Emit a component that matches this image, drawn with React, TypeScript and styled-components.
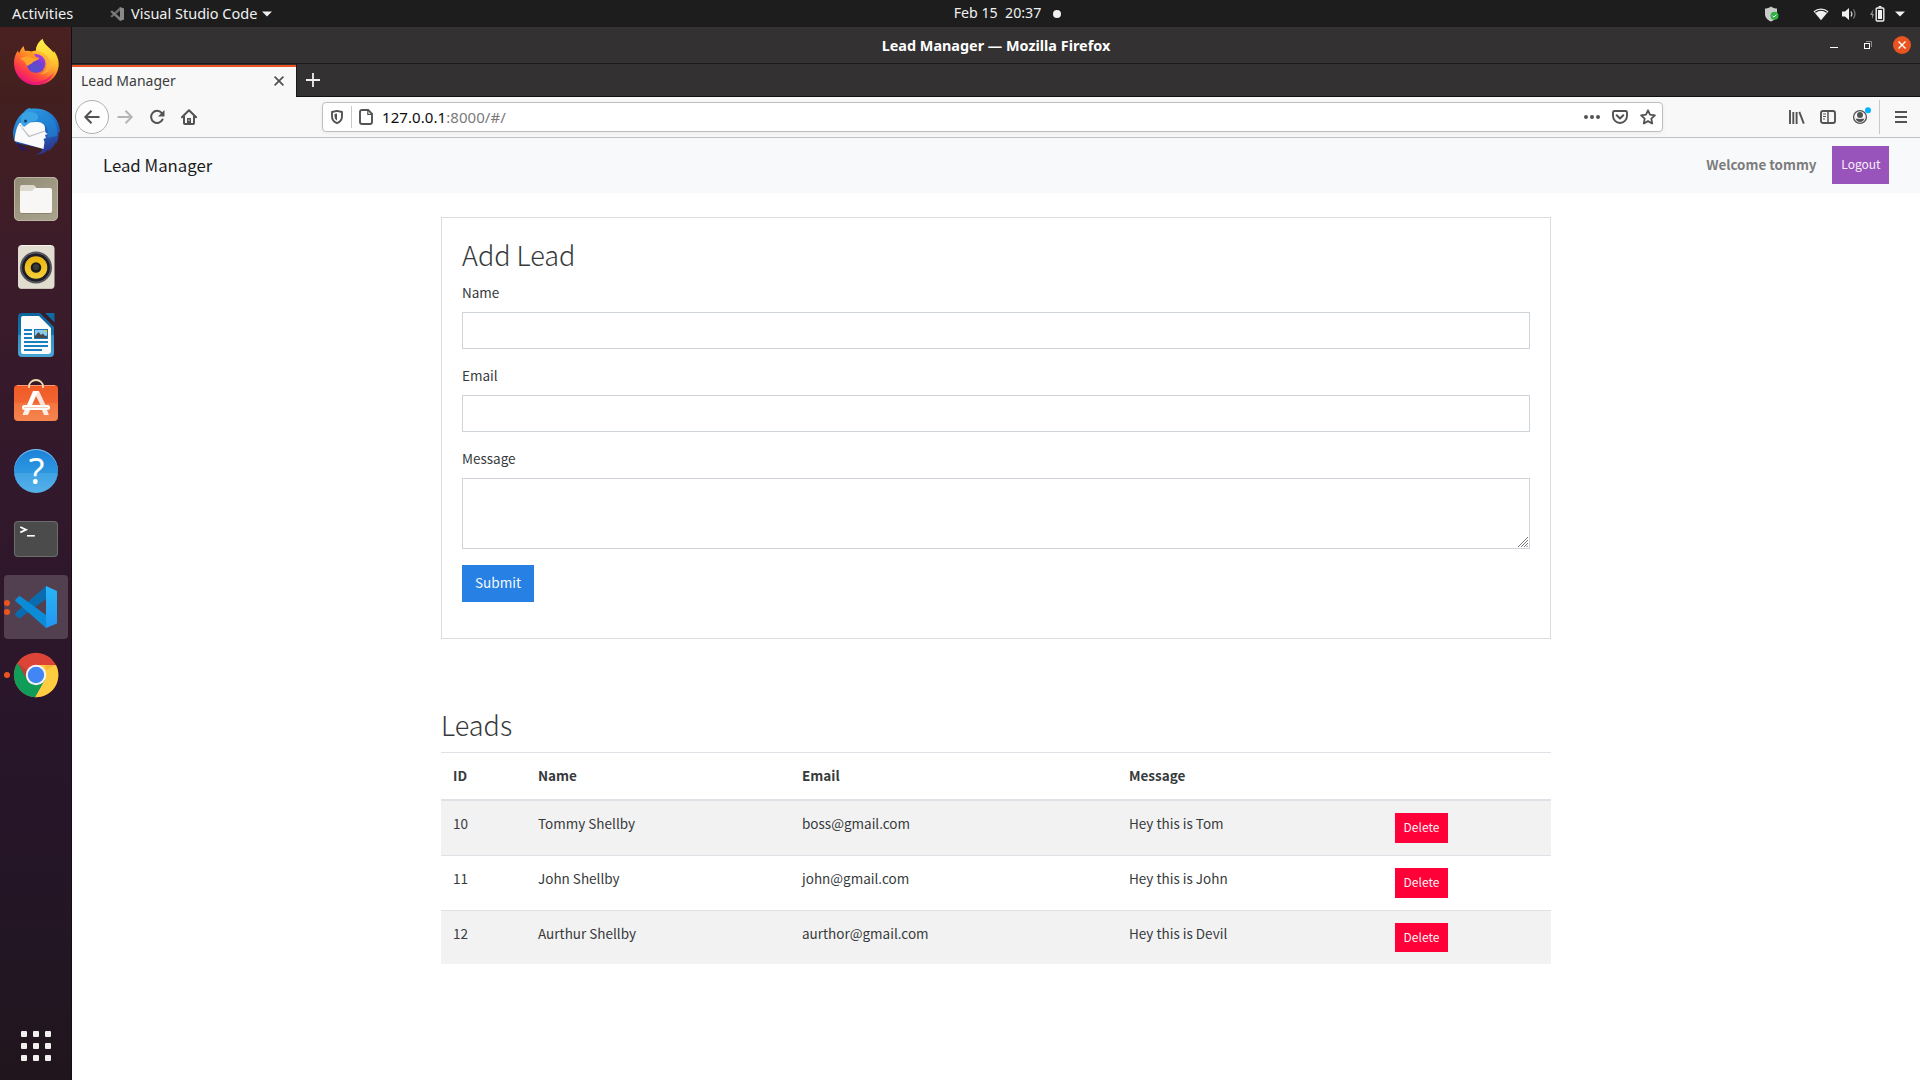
import React from "react";
import styled, { createGlobalStyle } from "styled-components";

const ui = `"Noto Sans", "Open Sans", sans-serif`;
const web = `"Noto Sans CJK SC", "Open Sans", sans-serif`;

const GlobalStyle = createGlobalStyle`
  * { box-sizing: border-box; }
  body { margin: 0; background: #fff; }
`;

/* ---------- desktop shell ---------- */

const Desktop = styled.div`
  width: 1920px;
  height: 1080px;
  display: flex;
  flex-direction: column;
  overflow: hidden;
  font-family: ${ui};
`;

const TopBar = styled.header`
  height: 27px;
  flex: none;
  display: grid;
  grid-template-columns: 1fr auto 1fr;
  align-items: center;
  background: #1d1d1d;
  color: #f0f0f0;
  font-size: 14.5px;
  line-height: 24px;
  white-space: pre;
`;

const TopLeft = styled.div`
  display: flex;
  align-items: center;
  padding-left: 12px;
`;

const Activities = styled.span`
  width: 98px;
  padding-bottom: 2px;
  font-size: 14.6px;
  letter-spacing: 0.05px;
`;

const FocusedApp = styled.span`
  margin-left: 7px;
  margin-right: 5px;
  padding-bottom: 2px;
`;

const Clock = styled.div`
  display: flex;
  align-items: center;
  gap: 12px;
  margin-left: 95px;
  font-size: 14.2px;
`;

const ClockText = styled.span`
  padding-bottom: 2px;
`;

const NoticeDot = styled.i`
  width: 8px;
  height: 8px;
  border-radius: 50%;
  background: #f2f2f2;
`;

const Tray = styled.div`
  display: flex;
  align-items: center;
  justify-content: flex-end;
  padding-right: 15px;
`;

const TrayItem = styled.span<{ $gap: number }>`
  display: flex;
  margin-right: ${(p) => p.$gap}px;
`;

const Workspace = styled.div`
  flex: 1;
  min-height: 0;
  display: flex;
`;

const Dock = styled.nav`
  width: 72px;
  flex: none;
  display: flex;
  flex-direction: column;
  align-items: center;
  gap: 4px;
  padding-top: 4px;
  border-right: 1px solid #160c14;
  background: linear-gradient(180deg, #4a2120 0%, #43201f 6%, #3d1c29 20%, #34192b 38%, #2f172b 52%, #27152a 70%, #231624 88%, #20151c 100%);
`;

const DockTile = styled.div<{ $active?: boolean }>`
  position: relative;
  width: 64px;
  height: 64px;
  flex: none;
  display: grid;
  place-items: center;
  border-radius: 4px;
  background: ${(p) => (p.$active ? "#524050" : "transparent")};
`;

const Running = styled.span`
  position: absolute;
  left: 0;
  top: 0;
  height: 64px;
  display: flex;
  flex-direction: column;
  justify-content: center;
  gap: 3px;
`;

const RunningDot = styled.i`
  width: 6px;
  height: 6px;
  border-radius: 50%;
  background: #e95420;
`;

const AppsGrid = styled.div`
  margin-top: auto;
  margin-bottom: 19px;
  display: grid;
  grid-template-columns: repeat(3, 6px);
  gap: 6px;
`;

const AppsDot = styled.i`
  height: 6px;
  border-radius: 1px;
  background: #f2f0ee;
`;

/* ---------- browser ---------- */

const BrowserWindow = styled.section`
  flex: 1;
  min-width: 0;
  display: flex;
  flex-direction: column;
`;

const TitleBar = styled.div`
  height: 37px;
  flex: none;
  display: grid;
  grid-template-columns: 1fr auto 1fr;
  align-items: center;
  background: #333132;
  border-bottom: 1px solid #1c1b1b;
`;

const WindowTitle = styled.div`
  grid-column: 2;
  padding-top: 2px;
  color: #fff;
  font-size: 14.4px;
  font-weight: 700;
  line-height: 34px;
`;

const WindowButtons = styled.div`
  display: flex;
  justify-content: flex-end;
  align-items: center;
  gap: 22px;
  padding-right: 9px;
`;

const RestoreSlot = styled.span`
  display: flex;
  margin-right: -3px;
`;

const TabStrip = styled.div`
  height: 33px;
  flex: none;
  display: flex;
  background: #333132;
`;

const Tab = styled.div`
  width: 224px;
  display: flex;
  align-items: center;
  justify-content: space-between;
  padding: 0 12px 2px 9px;
  margin-top: 1px;
  border-top: 2px solid #e95420;
  background: #f8f8f8;
  color: #3c3c3c;
  font-size: 14px;
`;

const TabTitle = styled.span`
  padding-bottom: 1px;
`;

const StripRest = styled.div`
  flex: 1;
  padding: 7px 0 0 8px;
  border-bottom: 1px solid #111;
  border-left: 1px solid #1b1a1a;
`;

const Toolbar = styled.div`
  height: 41px;
  flex: none;
  display: flex;
  align-items: center;
  padding: 0 12px 0 3px;
  background: #f8f8f8;
  border-bottom: 1px solid #bfbfbf;
`;

const BackButton = styled.div`
  width: 34px;
  height: 34px;
  display: grid;
  place-items: center;
  border: 1px solid #b0b0b0;
  border-radius: 50%;
  background: #fdfdfd;
`;

const ToolIcon = styled.span<{ $ml: number }>`
  display: flex;
  margin-left: ${(p) => p.$ml}px;
`;

const UrlBar = styled.div`
  width: 1341px;
  height: 30px;
  margin-left: 125px;
  display: flex;
  align-items: center;
  padding: 0 6px;
  border: 1px solid #bebebe;
  border-radius: 4px;
  background: #fff;
  box-shadow: 0 1px 4px rgba(0, 0, 0, 0.06);
`;

const Url = styled.span`
  margin-left: 9px;
  flex: 1;
  color: #7b7b7b;
  font-size: 15px;
  letter-spacing: 0.07px;
  line-height: 24px;
`;

const UrlHost = styled.span`
  color: #0c0c0d;
`;

const Divider = styled.i<{ $h: number; $ml: number }>`
  width: 1px;
  height: ${(p) => p.$h}px;
  margin-left: ${(p) => p.$ml}px;
  background: #c9c9c9;
`;

/* ---------- lead manager page ---------- */

const Page = styled.main`
  flex: 1;
  background: #fff;
  color: #373a3c;
  font-family: ${web};
  font-size: 13.5px;
  line-height: 20px;
`;

const Navbar = styled.div`
  height: 55px;
  display: flex;
  align-items: center;
  padding: 0 31px;
  background: #f8f9fb;
`;

const Brand = styled.span`
  flex: 1;
  color: #1c1c1c;
  font-size: 16.8px;
  line-height: 24px;
  padding-bottom: 1px;
`;

const Welcome = styled.strong`
  margin-right: 15.5px;
  padding-bottom: 3px;
  color: #7c7c7d;
  font-size: 13.4px;
`;

const Logout = styled.button`
  width: 57px;
  height: 38px;
  margin-bottom: 1px;
  padding: 0 0 2px 1px;
  border: 0;
  background: #9954bb;
  color: #f7f0fa;
  font: 12px/20px ${web};
`;

const Container = styled.div`
  width: 1110px;
  margin: 24px auto 0;
`;

const Card = styled.section`
  padding: 20px;
  border: 1px solid #dcdddf;
`;

const Heading = styled.h2`
  margin: 0 0 10px;
  font-size: 27px;
  font-weight: 300;
  line-height: 34px;
`;

const Field = styled.label`
  display: block;
  margin-bottom: 16px;
`;

const FieldName = styled.span`
  display: block;
  margin-bottom: 10px;
`;

const Input = styled.input`
  display: block;
  width: 100%;
  height: 37px;
  border: 1px solid #ced4da;
  background: #fff;
`;

const TextAreaWrap = styled.span`
  position: relative;
  display: block;
`;

const TextArea = styled.textarea`
  display: block;
  width: 100%;
  height: 71px;
  border: 1px solid #ced4da;
  background: #fff;
  resize: none;
`;

const Grip = styled.svg`
  position: absolute;
  right: 2px;
  bottom: 2px;
`;

const Submit = styled.button`
  display: block;
  width: 72px;
  height: 37px;
  margin-bottom: 16px;
  padding: 0 0 4px;
  border: 0;
  background: #2780e3;
  color: #f4f8fd;
  font: 13.6px/20px ${web};
`;

const LeadsSection = styled.section`
  margin-top: 69px;
`;

const Table = styled.div`
  border-top: 1px solid #dee2e6;
`;

const columns = "85px 264px 327px 266px 1fr";

const HeadRow = styled.div`
  display: grid;
  grid-template-columns: ${columns};
  height: 48px;
  padding-top: 12px;
  border-bottom: 2px solid #dee2e6;
  font-weight: 700;
`;

const Row = styled.div<{ $odd: boolean; $last: boolean }>`
  display: grid;
  grid-template-columns: ${columns};
  height: ${(p) => (p.$last ? 53 : 55)}px;
  padding: 12px 0;
  background: ${(p) => (p.$odd ? "#f2f2f2" : "#fff")};
  border-bottom: ${(p) => (p.$last ? "0" : "1px solid #dee2e6")};
`;

const Cell = styled.div`
  padding: 0 12px;
`;

const Delete = styled.button<{ $short: boolean }>`
  display: block;
  width: 53px;
  height: ${(p) => (p.$short ? 29 : 30)}px;
  padding: 0 0 ${(p) => (p.$short ? 2 : 3)}px;
  border: 0;
  background: #ff0039;
  color: #fff0f3;
  font: 12px/20px ${web};
`;

/* ---------- icons ---------- */

const Caret = ({ w = 10 }: { w?: number }) => (
  <svg width={w} height="6" viewBox="0 0 10 6"><path d="M0 .5h10L5 5.5z" fill="#f0f0f0" /></svg>
);

const CodeMini = () => (
  <svg width="14" height="14" viewBox="0 0 14 14">
    <path d="M10 0v3.700L2 10.500.3 9.300z" fill="#6a6a6a" />
    <path d="M10 14v-3.700L2 3.500.3 4.700z" fill="#7d7d7d" />
    <path d="M10 0l4 1.600v10.800L10 14z" fill="#8a8a8a" />
  </svg>
);

const Firefox = () => (
  <svg width="48" height="48" viewBox="0 0 48 48">
    <defs>
      <linearGradient id="fxBody" x1=".8" y1=".1" x2=".25" y2=".95">
        <stop offset="0" stopColor="#ffe226" /><stop offset=".3" stopColor="#ffbd2b" />
        <stop offset=".55" stopColor="#ff7a2a" /><stop offset=".78" stopColor="#ff3c46" /><stop offset="1" stopColor="#e8147c" />
      </linearGradient>
      <linearGradient id="fxTail" x1=".5" y1="0" x2=".5" y2="1">
        <stop offset="0" stopColor="#fff04a" /><stop offset=".5" stopColor="#ffd236" /><stop offset="1" stopColor="#ff9a2c" stopOpacity="0.2" />
      </linearGradient>
      <radialGradient id="fxGlobe" cx=".45" cy=".75" r=".75">
        <stop offset="0" stopColor="#4f55c8" /><stop offset=".5" stopColor="#7040d2" /><stop offset="1" stopColor="#b437e0" />
      </radialGradient>
    </defs>
    <path d="M24.500 46C12 46 2 36.500 2 24c0-5 1.500-9.500 4-12.500l1 3C8 12 9.500 9 11.500 7l1.500 5c2-.5 4-.3 6 .5l5-1C24 7 27 2.500 30.500 0c1 3.500 3 6 6 8.500l5 5 .5-1.500c3 4 4.700 8 4.700 13C46.700 37 37 46 24.500 46z" fill="url(#fxBody)" />
    <path d="M24 11.500C24 7 27 2.500 30.500 0c1 3.500 3 6 6 8.500 6 5 10 11 8.500 20-1.500 7-8 9.500-12 8 5-3 7-9 5-15-2-5-7-9-14-10z" fill="url(#fxTail)" />
    <circle cx="24" cy="24.500" r="9.500" fill="url(#fxGlobe)" />
    <path d="M19 12.500c2 1.500 3 3 5 5.500 1.500.4 3 .5 3.500 1-1 2.500-6 2.500-6.500 4-.5 2-4 1.500-5 4-1.500-1-2-5-2-7 1-4 3-6 5-7.500z" fill="#ff9323" />
    <path d="M8 20c4-3 8-3 11-1 2 1 4 1 6.500 1-1 2-5 2.500-5.500 3.500-1 2-4 2-5 3.500C13.500 23 11 20.500 8 20z" fill="#ffa42a" />
    <path d="M29 15.500c4 2 7 6 6 11-.8 5-4 8-8 8.500 8 1 13-4 12-11-.8-5-5-8-10-8.500z" fill="#ffb13a" opacity=".85" />
    <path d="M3 30c3 9 12 14 21 13s15-5 18-10c-3 8-10 13-18 13-10 0-18-6-21-16z" fill="#e6157d" opacity=".7" />
  </svg>
);

const Thunderbird = () => (
  <svg width="48" height="48" viewBox="0 0 48 48">
    <defs>
      <linearGradient id="tbBody" x1=".3" y1="0" x2=".7" y2="1">
        <stop offset="0" stopColor="#2fa0e6" /><stop offset=".5" stopColor="#1c6bc4" /><stop offset="1" stopColor="#30308c" />
      </linearGradient>
    </defs>
    <path d="M1 25C2 18 5 10 12 5c1-2 4-4 7-4l-1 1c13-2 24 4 28 14 1 3 2 6 2 10l-1.500-1c.5 5-.5 8-2.500 12l-.5-2c-1 4-4 7-7 9l.5-2c-4 4-8 5.500-13 5.500 3-1 6-3 7-6L4 36C2 33 .5 29 1 25z" fill="url(#tbBody)" />
    <path d="M10 12 8 20 31 16c5 4 6 9 4 15l10-2c2-12-5-22-18-24C20 4 13 7 10 12z" fill="#2490dc" opacity=".5" />
    <path d="M5 35c4 4 8 7 13 9-3-1-6-1-8-3l2 4C8 42 6 39 5 35z" fill="#221a6b" />
    <path d="M7.500 16 24 15c4 0 9 1 9 6 0 3 0 5 3 6l-3 1 1 3-2.500 1 1 3-1 7L2.500 34C3 28 4 21 7.500 16z" fill="#fafafa" />
    <path d="m8 18 9 11.500L33 24M17.500 29.500l-3-3" fill="none" stroke="#b9bdc4" strokeWidth="1.200" />
    <path d="M10 8c3-4 9-4 13-2 4 2 4 5 1 8-3 0-6 1-8 3l-4 3c-3-2-3-4-3-6s0-4 1-6z" fill="#3aa3e3" />
    <path d="M9 17l3 3-3 3z" fill="#e6e6e6" />
    <circle cx="13.500" cy="14" r="1.500" fill="#1b3c63" />
  </svg>
);

const Files = () => (
  <svg width="48" height="48" viewBox="0 0 48 48">
    <defs><linearGradient id="flBg" x1="0" y1="0" x2="1" y2="1"><stop offset="0" stopColor="#8f8a76" /><stop offset=".5" stopColor="#9f9882" /><stop offset="1" stopColor="#a9a28d" /></linearGradient></defs>
    <rect x="2" y="2" width="44" height="44" rx="5" fill="url(#flBg)" />
    <rect x="2.500" y="2.500" width="43" height="43" rx="4.500" fill="none" stroke="#b9b3a0" />
    <path d="M8 16v-4q0-2 2-2h11q1.500 0 2.500 1.500L25 14l-3 3z" fill="#dcd8cb" />
    <path d="M8 16h12l3-3h15q2 0 2 2v21q0 2-2 2H10q-2 0-2-2z" fill="#f8f7f5" />
    <path d="M9.500 38.500h29" stroke="#7e7867" strokeWidth="1" opacity=".7" />
  </svg>
);

const Rhythmbox = () => (
  <svg width="48" height="48" viewBox="0 0 48 48">
    <defs><linearGradient id="rbY" x1="0" y1="0" x2="0" y2="1"><stop offset="0" stopColor="#e9b40d" /><stop offset="1" stopColor="#f7cf3a" /></linearGradient></defs>
    <rect x="6" y="2" width="36.500" height="44" rx="4" fill="#e1ddd1" />
    <path d="M9 2.500h30" stroke="#f5f3ee" /><path d="M9 45.500h30" stroke="#c7c2b4" />
    <circle cx="24" cy="24.500" r="16" fill="#55555b" />
    <circle cx="24" cy="24.500" r="14" fill="#1e1e29" />
    <circle cx="24" cy="24.500" r="11.300" fill="url(#rbY)" />
    <circle cx="24" cy="24.500" r="5.300" fill="#1c1c1c" />
    <circle cx="24" cy="24" r="3" fill="#3a3a3a" />
  </svg>
);

const Writer = () => (
  <svg width="48" height="48" viewBox="0 0 48 48">
    <defs><linearGradient id="wr" x1="0" y1="0" x2="0" y2="1"><stop offset="0" stopColor="#0d659c" /><stop offset=".5" stopColor="#0e76ae" /><stop offset=".5" stopColor="#2f92c4" /><stop offset="1" stopColor="#47a5d2" /></linearGradient></defs>
    <path d="M10 2h18l14 14v26q0 4-4 4H10q-4 0-4-4V6q0-4 4-4z" fill="url(#wr)" />
    <path d="M33 2h9.500v9.500z" fill="#0d6ba3" />
    <path d="M11 5h16l12 12v23q0 3-3 3H11q-2 0-2-2V7q0-2 2-2z" fill="#fcfcfc" />
    <path d="M12 19h8M12 23h8M12 27h8M12 31h24M12 35h24M12 39h18" stroke="#1a7fc0" strokeWidth="2" />
    <rect x="22" y="18" width="14" height="10" fill="#1579b8" /><rect x="23" y="19" width="12" height="8" fill="#8cc9ee" />
    <path d="M32 19h3v3z" fill="#f5c211" />
    <path d="M23 27v-2l3.500-4 2.500 3 2-1.500 2 2.500 2-.5V27z" fill="#474747" />
  </svg>
);

const Software = () => (
  <svg width="48" height="48" viewBox="0 0 48 48">
    <defs><linearGradient id="sw" x1="0" y1="0" x2="0" y2="1"><stop offset="0" stopColor="#f15a25" /><stop offset=".5" stopColor="#f26533" /><stop offset=".5" stopColor="#f3743f" /><stop offset="1" stopColor="#f5854f" /></linearGradient></defs>
    <rect x="2" y="6" width="44" height="36" rx="4" fill="url(#sw)" />
    <path d="M5 6.500h38" stroke="#f99a72" />
    <path d="M17 9V7.500a7 6.500 0 0 1 14 0V9" fill="none" stroke="#f5dcb0" strokeWidth="1.800" />
    <path d="M21 12h6l-1.500 5H24L20 26h-5z" fill="#fff" />
    <path d="M23.500 16 27 12l6.500 14h-5z" fill="#fce4da" />
    <path d="M12.500 31h5.500l-2 5h-5.500zM30 31h5l1.800 5H32z" fill="#fdeee8" />
    <rect x="10" y="26" width="28" height="5" rx="2.500" fill="#fff" />
    <path d="M12 28.500h24" stroke="#f6bda6" strokeWidth=".8" />
  </svg>
);

const HelpDisc = styled.div`
  width: 44px;
  height: 44px;
  padding-left: 2px;
  border-radius: 50%;
  background: linear-gradient(180deg, #1b82d8 0%, #2e97e0 54%, #3fa2e4 54%, #56b1ea 100%);
  box-shadow: inset 0 1px 0 #7fbdee;
  color: #fff;
  font: 36px/44px ${ui};
  text-align: center;
`;

const Help = () => <HelpDisc>?</HelpDisc>;

const Terminal = () => (
  <svg width="48" height="48" viewBox="0 0 48 48">
    <rect x="2" y="6" width="44" height="36" rx="4" fill="#4b4b4b" />
    <rect x="2.500" y="6.500" width="43" height="35" rx="3.500" fill="none" stroke="#6b6f6b" />
    <path d="m8.300 12 5.700 2.700-5.700 2.700" fill="none" stroke="#fff" strokeWidth="1.800" />
    <path d="M15 20.800h7.800" stroke="#fff" strokeWidth="1.600" />
  </svg>
);

const Code = () => (
  <svg width="48" height="48" viewBox="0 0 48 48">
    <defs><linearGradient id="vc" x1="0" y1="0" x2="0" y2="1"><stop offset="0" stopColor="#29b6f6" /><stop offset="1" stopColor="#2196f3" /></linearGradient></defs>
    <path d="M34 3v13L8.200 35q-.9.700-1.700-.1l-3-3q-.9-1 .1-1.900z" fill="#0a6cb0" />
    <path d="M34 45V32L8.200 13.300q-.9-.7-1.700.1l-3 3q-.9 1 .1 1.900z" fill="#0c8bd6" />
    <path d="M34 3 45 8v32.500L34 45z" fill="url(#vc)" />
  </svg>
);

const Chrome = () => (
  <svg width="48" height="48" viewBox="0 0 48 48">
    <circle cx="24" cy="24" r="22.200" fill="#db4437" />
    <path d="M24 14h20a22.200 22.200 0 0 1-21 32.200L33 28z" fill="#ffcd40" />
    <path d="M5.500 12A22.200 22.200 0 0 0 23 46.200L33 28.500l-9 5.500-8.500-5z" fill="#0f9d58" />
    <path d="M33 14h11l-10 5z" fill="#f2a93a" opacity=".6" />
    <path d="M5.500 12 15 29l1-9z" fill="#9c3a32" opacity=".45" />
    <circle cx="24" cy="24" r="10.200" fill="#f5f5f5" />
    <circle cx="24" cy="24" r="8.200" fill="#4285f4" />
  </svg>
);

const ink = "#535353";

const Arrow = ({ right, color }: { right?: boolean; color: string }) => (
  <svg width="16" height="16" viewBox="0 0 16 16">
    <path d={right ? "M.5 8h14M8.500 1.800 14.700 8l-6.200 6.200" : "M15.500 8h-14M7.500 1.800 1.300 8l6.200 6.200"} fill="none" stroke={color} strokeWidth="2" strokeLinejoin="round" />
  </svg>
);

const Reload = () => (
  <svg width="16" height="16" viewBox="0 0 16 16">
    <path d="M12.700 4A6 6 0 1 0 13.500 10.500" fill="none" stroke={ink} strokeWidth="2" strokeLinecap="round" />
    <path d="M15.500 1v6.500H9z" fill={ink} />
  </svg>
);

const Home = () => (
  <svg width="16" height="16" viewBox="0 0 16 16">
    <path d="M.9 8.300 8 1.200l7.100 7.100M3 7v7.200q0 .8.800.8h8.400q.8 0 .8-.8V7" fill="none" stroke={ink} strokeWidth="2" strokeLinecap="round" strokeLinejoin="round" />
    <path d="M6 9h4v6H6z" fill={ink} /><path d="M7.500 10.500h1v1.500h-1z" fill="#f8f8f8" />
  </svg>
);

const Shield = () => (
  <svg width="16" height="16" viewBox="0 0 16 16">
    <path d="M8 1.800 13 3v4.500c0 3-1.800 5.300-5 6.700-3.200-1.400-5-3.700-5-6.700V3z" fill="none" stroke={ink} strokeWidth="1.900" strokeLinejoin="round" />
    <path d="M8 4.500v7C6.300 10.500 5.500 9 5.500 7V5z" fill={ink} />
  </svg>
);

const PageIcon = () => (
  <svg width="14" height="16" viewBox="0 0 14 16">
    <path d="M3 1h6.200L13 4.800V13q0 2-2 2H3q-2 0-2-2V3q0-2 2-2z" fill="none" stroke={ink} strokeWidth="1.900" />
    <path d="M8.800 1v4.300H13" fill="none" stroke={ink} strokeWidth="1.200" />
  </svg>
);

const Dots = () => (
  <svg width="16" height="4" viewBox="0 0 16 4"><g fill={ink}><circle cx="2" cy="2" r="2" /><circle cx="8" cy="2" r="2" /><circle cx="14" cy="2" r="2" /></g></svg>
);

const Pocket = () => (
  <svg width="16" height="16" viewBox="0 0 16 16">
    <path d="M2.500 2h11q1.500 0 1.500 1.500V7A7 7 0 0 1 1 7V3.500Q1 2 2.500 2z" fill="none" stroke={ink} strokeWidth="1.900" />
    <path d="m4.700 6.300 3.300 3.200 3.300-3.200" fill="none" stroke={ink} strokeWidth="2" strokeLinecap="round" strokeLinejoin="round" />
  </svg>
);

const Star = () => (
  <svg width="16" height="16" viewBox="0 0 16 16">
    <path d="m8 1.300 2 4.400 4.900.6-3.600 3.300.9 4.900L8 12.100l-4.200 2.400.9-4.900L1.100 6.300 6 5.700z" fill="none" stroke={ink} strokeWidth="1.800" strokeLinejoin="round" />
  </svg>
);

const Library = () => (
  <svg width="16" height="16" viewBox="0 0 16 16"><path d="M1 1v14M4.300 3v12M7.600 3v12M10.300 2.800 14.800 14.700" stroke={ink} strokeWidth="1.900" /></svg>
);

const Sidebar = () => (
  <svg width="16" height="16" viewBox="0 0 16 16">
    <rect x="1" y="2" width="14" height="12" rx="2" fill="none" stroke={ink} strokeWidth="1.900" />
    <path d="M8 2v12" stroke={ink} strokeWidth="1.500" /><path d="M3 5h3M3 7.500h3M3 10h2" stroke={ink} strokeWidth="1" />
  </svg>
);

const Account = () => (
  <svg width="20" height="20" viewBox="0 0 20 20">
    <circle cx="8" cy="10" r="6.400" fill="none" stroke={ink} strokeWidth="1.300" />
    <circle cx="8" cy="8" r="3" fill={ink} /><path d="M3.600 11.200q1.400 1 2.400.4 2 1 4 0 1 .6 2.400-.4Q11.500 15 8 15t-4.400-3.800z" fill={ink} />
    <circle cx="16" cy="3.200" r="3" fill="#00b3ff" />
  </svg>
);

const Burger = () => (
  <svg width="12" height="12" viewBox="0 0 12 12"><path d="M0 1h12M0 6h12M0 11h12" stroke={ink} strokeWidth="2" /></svg>
);

/* ---------- data ---------- */

const dock = [
  { icon: <Firefox />, dots: 0 }, { icon: <Thunderbird />, dots: 0 }, { icon: <Files />, dots: 0 },
  { icon: <Rhythmbox />, dots: 0 }, { icon: <Writer />, dots: 0 }, { icon: <Software />, dots: 0 },
  { icon: <Help />, dots: 0 }, { icon: <Terminal />, dots: 0 }, { icon: <Code />, dots: 2, active: true },
  { icon: <Chrome />, dots: 1 },
];

const leads = [
  { id: 10, name: "Tommy Shellby", email: "boss@gmail.com", message: "Hey this is Tom" },
  { id: 11, name: "John Shellby", email: "john@gmail.com", message: "Hey this is John" },
  { id: 12, name: "Aurthur Shellby", email: "aurthor@gmail.com", message: "Hey this is Devil" },
];

export default function App() {
  return (
    <Desktop>
      <GlobalStyle />
      <TopBar>
        <TopLeft>
          <Activities>Activities</Activities>
          <CodeMini />
          <FocusedApp>Visual Studio Code</FocusedApp>
          <Caret />
        </TopLeft>
        <Clock><ClockText>{"Feb 15  20:37"}</ClockText><NoticeDot /></Clock>
        <Tray>
          <TrayItem $gap={34}>
            <svg width="14" height="16" viewBox="0 0 14 16">
              <path d="M6 .5c2 1.500 4 2 6 2V8c0 3.500-2.500 6-6 7.500C2.500 14 0 11.500 0 8V2.500c2 0 4-.5 6-2z" fill="#c9cbcb" />
              <circle cx="9.500" cy="9.800" r="4" fill="#2fb344" /><path d="m7.700 9.800 1.300 1.300 2.300-2.400" fill="none" stroke="#fff" />
            </svg>
          </TrayItem>
          <TrayItem $gap={13}>
            <svg width="16" height="14" viewBox="0 0 16 14">
              <path d="M.5 4.200a11.500 11.500 0 0 1 15 0L8 13.300z" fill="#f0f0f0" /><path d="M2.300 5.300a9 9 0 0 1 11.400 0" fill="none" stroke="#1d1d1d" strokeWidth="1.200" />
            </svg>
          </TrayItem>
          <TrayItem $gap={13}>
            <svg width="15" height="14" viewBox="0 0 15 14">
              <path d="M0 4.500h3L7 1v12L3 9.500H0z" fill="#f0f0f0" /><path d="M9 4.500q1.700 2.500 0 5" fill="none" stroke="#d0d0d0" strokeWidth="1.300" /><path d="M11.500 2.500q3 4.500 0 9" fill="none" stroke="#777" strokeWidth="1.300" />
            </svg>
          </TrayItem>
          <TrayItem $gap={10}>
            <svg width="15" height="16" viewBox="0 0 15 16">
              <path d="M3.500 3 0 9h2v4l2-5H2.500z" fill="#8d8d8d" /><path d="M8.500 0h3v1.500h-3z" fill="#f0f0f0" /><rect x="6.200" y="2" width="7.600" height="13" rx="1" fill="none" stroke="#f0f0f0" strokeWidth="1.400" /><rect x="8" y="4" width="4" height="9" fill="#f0f0f0" />
            </svg>
          </TrayItem>
          <Caret />
        </Tray>
      </TopBar>
      <Workspace>
        <Dock>
          {dock.map((d, i) => (
            <DockTile key={i} $active={d.active}>
              {d.icon}
              <Running>{Array.from({ length: d.dots }, (_, k) => <RunningDot key={k} />)}</Running>
            </DockTile>
          ))}
          <AppsGrid>{Array.from({ length: 9 }, (_, k) => <AppsDot key={k} />)}</AppsGrid>
        </Dock>
        <BrowserWindow>
          <TitleBar>
            <WindowTitle>Lead Manager — Mozilla Firefox</WindowTitle>
            <WindowButtons>
              <svg width="12" height="12" viewBox="0 0 12 12"><path d="M2 8.500h8" stroke="#fff" /></svg>
              <RestoreSlot><svg width="12" height="12" viewBox="0 0 12 12"><rect x="2.500" y="4.500" width="5" height="5" fill="none" stroke="#fff" /><path d="M4 2.500h5.500V8" fill="none" stroke="#8d8c8c" /></svg></RestoreSlot>
              <svg width="18" height="18" viewBox="0 0 18 18"><circle cx="9" cy="9" r="9" fill="#e95420" /><path d="m5.500 5.500 7 7m0-7-7 7" stroke="#fff" strokeWidth="1.400" /></svg>
            </WindowButtons>
          </TitleBar>
          <TabStrip>
            <Tab>
              <TabTitle>Lead Manager</TabTitle>
              <svg width="10" height="10" viewBox="0 0 10 10"><path d="m.6.600 8.800 8.800m0-8.800L.6 9.400" stroke="#4c4c4c" strokeWidth="1.600" /></svg>
            </Tab>
            <StripRest>
              <svg width="16" height="16" viewBox="0 0 16 16"><path d="M8 1v14M1 8h14" stroke="#f0f0f0" strokeWidth="1.800" /></svg>
            </StripRest>
          </TabStrip>
          <Toolbar>
            <BackButton><Arrow color={ink} /></BackButton>
            <ToolIcon $ml={8}><Arrow right color="#b5b5b5" /></ToolIcon>
            <ToolIcon $ml={16}><Reload /></ToolIcon>
            <ToolIcon $ml={16}><Home /></ToolIcon>
            <UrlBar>
              <Shield />
              <Divider $h={22} $ml={6} />
              <ToolIcon $ml={7}><PageIcon /></ToolIcon>
              <Url><UrlHost>127.0.0.1</UrlHost>:8000/#/</Url>
              <Dots />
              <ToolIcon $ml={12}><Pocket /></ToolIcon>
              <ToolIcon $ml={12}><Star /></ToolIcon>
            </UrlBar>
            <ToolIcon $ml={126}><Library /></ToolIcon>
            <ToolIcon $ml={15}><Sidebar /></ToolIcon>
            <ToolIcon $ml={16}><Account /></ToolIcon>
            <Divider $h={34} $ml={7} />
            <ToolIcon $ml={15}><Burger /></ToolIcon>
          </Toolbar>
          <Page>
            <Navbar>
              <Brand>Lead Manager</Brand>
              <Welcome>Welcome tommy</Welcome>
              <Logout>Logout</Logout>
            </Navbar>
            <Container>
              <Card>
                <Heading>Add Lead</Heading>
                <Field><FieldName>Name</FieldName><Input /></Field>
                <Field><FieldName>Email</FieldName><Input /></Field>
                <Field>
                  <FieldName>Message</FieldName>
                  <TextAreaWrap>
                    <TextArea />
                    <Grip width="10" height="10" viewBox="0 0 10 10"><path d="M0 10 10 0M3 10l7-7M6 10l4-4M8.500 10l1.500-1.500" stroke="#777" strokeWidth="1" /></Grip>
                  </TextAreaWrap>
                </Field>
                <Submit>Submit</Submit>
              </Card>
              <LeadsSection>
                <Heading>Leads</Heading>
                <Table>
                  <HeadRow><Cell>ID</Cell><Cell>Name</Cell><Cell>Email</Cell><Cell>Message</Cell><Cell /></HeadRow>
                  {leads.map((l, i) => (
                    <Row key={l.id} $odd={i % 2 === 0} $last={i === leads.length - 1}>
                      <Cell>{l.id}</Cell><Cell>{l.name}</Cell><Cell>{l.email}</Cell><Cell>{l.message}</Cell>
                      <Cell><Delete $short={i === leads.length - 1}>Delete</Delete></Cell>
                    </Row>
                  ))}
                </Table>
              </LeadsSection>
            </Container>
          </Page>
        </BrowserWindow>
      </Workspace>
    </Desktop>
  );
}
